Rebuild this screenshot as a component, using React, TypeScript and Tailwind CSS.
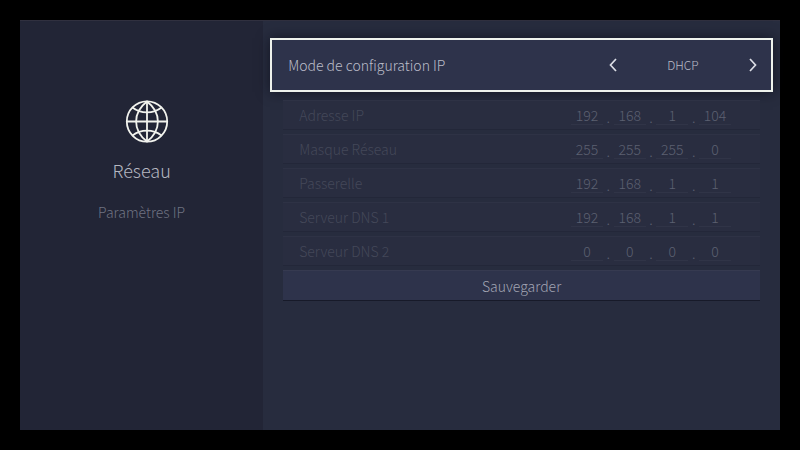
import React, { useState } from 'react';

const MODES = ['DHCP', 'Statique'];

const ADDRESSES = [
  { id: 'ip', label: 'Adresse IP', octets: [192, 168, 1, 104] },
  { id: 'mask', label: 'Masque Réseau', octets: [255, 255, 255, 0] },
  { id: 'gateway', label: 'Passerelle', octets: [192, 168, 1, 1] },
  { id: 'dns1', label: 'Serveur DNS 1', octets: [192, 168, 1, 1] },
  { id: 'dns2', label: 'Serveur DNS 2', octets: [0, 0, 0, 0] },
];

const Globe: React.FC = () => (
  <svg width="54" height="44" viewBox="-10 0 54 44" fill="none" stroke="#f2f3ee" strokeWidth="1.8" aria-hidden="true">
    <circle cx="22" cy="21.500" r="20.2" />
    <path d="M22 1.500V41.500M2 21.500H42" />
    <path d="M22 1.500C7.500 12.500 7.500 30.500 22 41.500C36.500 30.500 36.500 12.500 22 1.500Z" />
    <path d="M7.500 7.500C15.500 14 28.500 14 36.500 7.500M7.500 35.500C15.500 29 28.500 29 36.500 35.500" />
  </svg>
);

const Chevron: React.FC<{ direction: 'left' | 'right' }> = ({ direction }) => (
  <svg width="8" height="14" viewBox="0 0 8 14" fill="none" stroke="#dcdee6" strokeWidth="1.7" aria-hidden="true">
    <path d={direction === 'left' ? 'M7 1L1.500 7L7 13' : 'M1 1L6.500 7L1 13'} />
  </svg>
);

const AddressRow: React.FC<{ id: string; label: string; octets: number[]; disabled: boolean }> = ({ id, label, octets, disabled }) => (
  <div className="flex h-[30px] items-center justify-between border-t border-b border-t-[#2e3245] border-b-[#232739] bg-[#292d40] pr-[29px] pl-4">
    <label htmlFor={`${id}-0`} className="text-sm text-[#444859]">{label}</label>
    <div className="flex w-40 items-end justify-between">
      {octets.map((octet, i) => (
        <React.Fragment key={i}>
          {i > 0 && <span className="text-sm leading-4 text-[#5c6071]">.</span>}
          <input
            id={`${id}-${i}`}
            aria-label={`${label} ${i + 1}`}
            className="h-5 w-8 border-b border-[#303447] bg-transparent text-center text-sm text-[#5c6071]"
            defaultValue={octet}
            disabled={disabled}
          />
        </React.Fragment>
      ))}
    </div>
  </div>
);

const App: React.FC = () => {
  const [mode, setMode] = useState(0);

  const changeMode = (step: number) => {
    setMode(prev => (prev + step + MODES.length) % MODES.length);
  };

  return (
    <div className="flex min-h-screen bg-black p-5 font-['Noto_Sans_CJK_SC',sans-serif] font-light">
      <div className="flex flex-1 border-t border-[#30303f] bg-[#272c3e]">
        <aside className="flex w-[32%] flex-col items-center bg-[#222536] pt-[79px]">
          <Globe />
          <h1 className="mt-3.5 text-lg leading-6 text-[#b5b7c1]">Réseau</h1>
          <p className="mt-5 text-sm leading-5 text-[#6f7382]">Paramètres IP</p>
        </aside>

        <main className="flex-1 px-[7px] pt-[17px]">
          <div className="flex h-[54px] items-center justify-between border-2 border-[#eef2ec] bg-[#2e334b] pr-3.5 pl-4 shadow-[0_0_12px_rgba(10,12,24,0.7)]">
            <span className="text-sm text-[#bbbdc9]">Mode de configuration IP</span>
            <div className="flex w-[148px] items-center justify-between">
              <button type="button" aria-label="Mode précédent" onClick={() => changeMode(-1)}>
                <Chevron direction="left" />
              </button>
              <output className="text-xs text-[#b9bbc7]">{MODES[mode]}</output>
              <button type="button" aria-label="Mode suivant" onClick={() => changeMode(1)}>
                <Chevron direction="right" />
              </button>
            </div>
          </div>

          <form className="mx-[13px] mt-2 flex flex-col gap-1" onSubmit={e => e.preventDefault()}>
            {ADDRESSES.map(address => (
              <AddressRow key={address.id} {...address} disabled={mode === 0} />
            ))}
            <button type="submit" className="h-[31px] border-t border-b border-t-[#363a50] border-b-[#171a29] bg-[#2e334b] text-sm text-[#a1a4b2]">
              Sauvegarder
            </button>
          </form>
        </main>
      </div>
    </div>
  );
};

export default App;
